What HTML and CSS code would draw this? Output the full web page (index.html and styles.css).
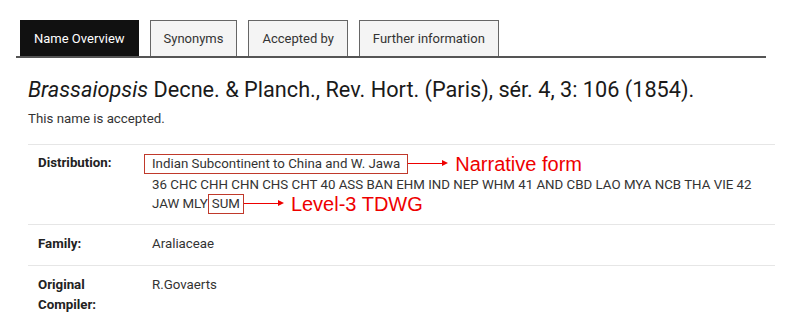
FILE: index.html
```html
<!DOCTYPE html>
<html lang="en">
<head>
  <meta charset="UTF-8">
  <title>Brassaiopsis Decne. &amp; Planch.</title>
  <link rel="stylesheet" href="styles.css">
</head>
<body>
  <nav class="tabs">
    <a class="tab active">Name Overview</a>
    <a class="tab">Synonyms</a>
    <a class="tab">Accepted by</a>
    <a class="tab">Further information</a>
  </nav>

  <main class="content">
    <h1 class="name"><i>Brassaiopsis</i> Decne. &amp; Planch., Rev. Hort. (Paris), sér. 4, 3: 106 (1854).</h1>
    <p class="status">This name is accepted.</p>

    <dl class="facts">
      <div class="row dist">
        <dt>Distribution:</dt>
        <dd>
          <div class="line"><span class="mark wide">Indian Subcontinent to China and W. Jawa</span><span class="arrow"></span><span class="note">Narrative form</span></div>
          <div class="line">36 CHC CHH CHN CHS CHT 40 ASS BAN EHM IND NEP WHM 41 AND CBD LAO MYA NCB THA VIE 42</div>
          <div class="line">JAW MLY<span class="mark">SUM</span><span class="arrow"></span><span class="note">Level-3 TDWG</span></div>
        </dd>
      </div>
      <div class="row">
        <dt>Family:</dt>
        <dd>Araliaceae</dd>
      </div>
      <div class="row">
        <dt>Original Compiler:</dt>
        <dd>R.Govaerts</dd>
      </div>
    </dl>
  </main>
</body>
</html>
```

FILE: styles.css
```css
body {
  margin:0; background:#fff; color:#333;
  font-family:Roboto, "Liberation Sans", sans-serif; font-size:13.3px;
}
.tabs {
  display:flex; gap:11px;
  margin:20px 36px 0 16px; padding-left:4px;
  border-bottom:2px solid #555;
}
.tab {
  display:flex; align-items:center;
  height:35px; padding:0 13px;
  border:1px solid #666; border-bottom:none;
  background:#f4f4f4; color:#333; font-size:13px;
}
.tab.active {background:#111; border-color:#111; color:#fff;}
.content {padding:0 27px 0 28px;}
.name {
  margin:19px 0 0; font-size:21.7px; font-weight:400; color:#1a1a1a;
  line-height:26px;
}
.status {margin:7px 0 0; line-height:18px;}
.facts {margin:16px 0 0; border-top:1px solid #e6e6e6;}
.row {
  display:flex; padding:9px 0 11px;
  border-bottom:1px solid #e6e6e6; line-height:20px;
}
.row:last-child {border-bottom:none;}
.row.dist {padding:7px 0 11px;}
.row dt {width:100px; padding:0 14px 0 10px; font-weight:700; color:#222;}
.row.dist dt {padding-top:1px;}
.row dd {margin:0; flex:1;}
.line {display:flex; align-items:center; white-space:nowrap; height:19px;}
.line:first-child {height:23px;}
.mark {
  display:inline-block; border:1px solid #c0392b;
  padding:0 3px; line-height:18px;
}
.mark.wide {padding:0 7px; margin-left:-8px;}
.arrow {
  position:relative; display:inline-block;
  width:38px; height:1px; background:#e00; margin-right:2px;
}
.arrow::after {
  content:""; position:absolute; right:-2px; top:-3px;
  border-left:6px solid #e00; border-top:3.5px solid transparent; border-bottom:3.5px solid transparent;
}
.note {
  margin-left:7px; color:#e00;
  font-family:"Liberation Sans", Arial, sans-serif; font-size:20px; line-height:20px;
}
```
